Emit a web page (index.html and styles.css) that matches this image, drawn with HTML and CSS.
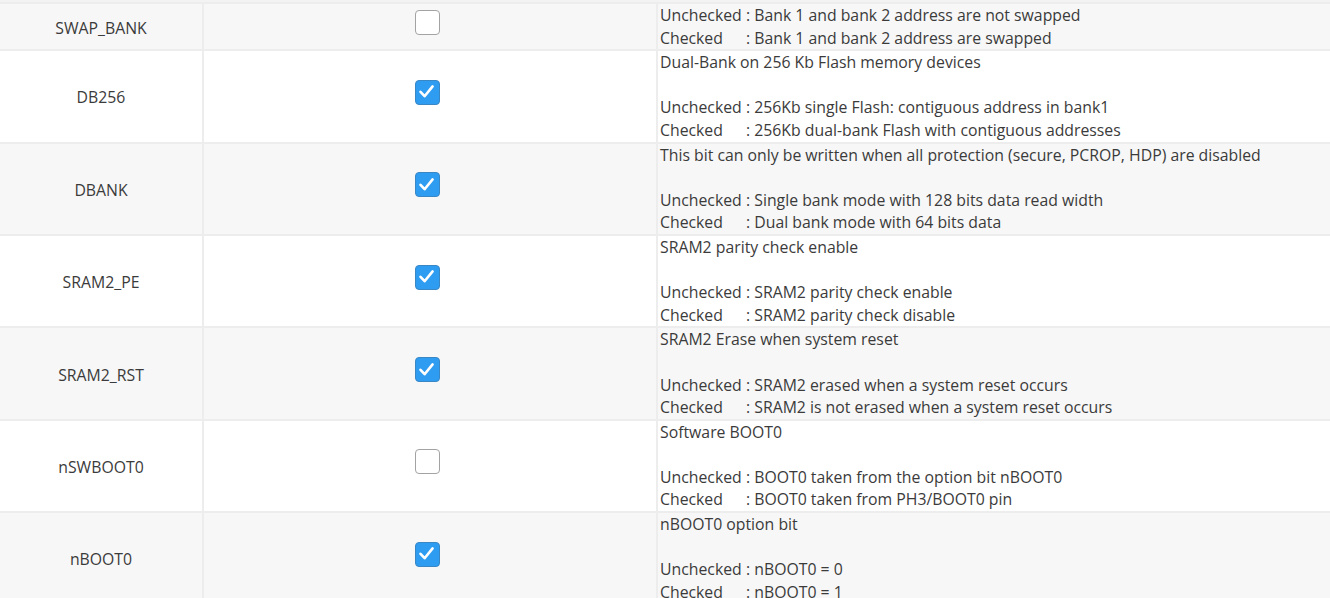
FILE: index.html
```html
<!DOCTYPE html>
<html>
<head>
<meta charset="utf-8">
<link rel="stylesheet" href="styles.css">
</head>
<body>
<div class="grid">
  <div class="name alt">SWAP_BANK</div>
  <div class="chk alt"><span class="box"></span></div>
  <div class="desc alt"><div><span class="k">Unchecked</span>: Bank 1 and bank 2 address are not swapped</div><div><span class="k">Checked</span>: Bank 1 and bank 2 address are swapped</div></div>

  <div class="name">DB256</div>
  <div class="chk"><span class="box on"><svg viewBox="0 0 25 25"><path d="M6.5 12.8 L10.6 17.2 L18.6 7.4"/></svg></span></div>
  <div class="desc"><div>Dual-Bank on 256 Kb Flash memory devices</div><div class="blank"></div><div><span class="k">Unchecked</span>: 256Kb single Flash: contiguous address in bank1</div><div><span class="k">Checked</span>: 256Kb dual-bank Flash with contiguous addresses</div></div>

  <div class="name alt">DBANK</div>
  <div class="chk alt"><span class="box on"><svg viewBox="0 0 25 25"><path d="M6.5 12.8 L10.6 17.2 L18.6 7.4"/></svg></span></div>
  <div class="desc alt"><div>This bit can only be written when all protection (secure, PCROP, HDP) are disabled</div><div class="blank"></div><div><span class="k">Unchecked</span>: Single bank mode with 128 bits data read width</div><div><span class="k">Checked</span>: Dual bank mode with 64 bits data</div></div>

  <div class="name">SRAM2_PE</div>
  <div class="chk"><span class="box on"><svg viewBox="0 0 25 25"><path d="M6.5 12.8 L10.6 17.2 L18.6 7.4"/></svg></span></div>
  <div class="desc"><div>SRAM2 parity check enable</div><div class="blank"></div><div><span class="k">Unchecked</span>: SRAM2 parity check enable</div><div><span class="k">Checked</span>: SRAM2 parity check disable</div></div>

  <div class="name alt">SRAM2_RST</div>
  <div class="chk alt"><span class="box on"><svg viewBox="0 0 25 25"><path d="M6.5 12.8 L10.6 17.2 L18.6 7.4"/></svg></span></div>
  <div class="desc alt"><div>SRAM2 Erase when system reset</div><div class="blank"></div><div><span class="k">Unchecked</span>: SRAM2 erased when a system reset occurs</div><div><span class="k">Checked</span>: SRAM2 is not erased when a system reset occurs</div></div>

  <div class="name">nSWBOOT0</div>
  <div class="chk"><span class="box"></span></div>
  <div class="desc"><div>Software BOOT0</div><div class="blank"></div><div><span class="k">Unchecked</span>: BOOT0 taken from the option bit nBOOT0</div><div><span class="k">Checked</span>: BOOT0 taken from PH3/BOOT0 pin</div></div>

  <div class="name alt">nBOOT0</div>
  <div class="chk alt"><span class="box on"><svg viewBox="0 0 25 25"><path d="M6.5 12.8 L10.6 17.2 L18.6 7.4"/></svg></span></div>
  <div class="desc alt"><div>nBOOT0 option bit</div><div class="blank"></div><div><span class="k">Unchecked</span>: nBOOT0 = 0</div><div><span class="k">Checked</span>: nBOOT0 = 1</div></div>
</div>
</body>
</html>
```

FILE: styles.css
```css
html, body {
  margin: 0;
  padding: 0;
  background: #ffffff;
  overflow: hidden;
}
body {
  font-family: "Open Sans", "Noto Sans", sans-serif;
  font-size: 15.8px;
  color: #3b3b3b;
}
.grid {
  display: grid;
  grid-template-columns: 202px 452px 1fr;
  gap: 2px;
  padding-top: 2px;
  background: #ededed;
  border-top: 2px solid #f3f3f3;
}
.grid > div {
  background: #ffffff;
}
.grid > div.alt {
  background: #f7f7f7;
}
.name {
  display: flex;
  align-items: center;
  justify-content: center;
  padding-top: 2px;
}
.chk {
  display: flex;
  align-items: center;
  justify-content: center;
  padding-right: 6px;
  padding-bottom: 8px;
}
.desc {
  padding-left: 2px;
  line-height: 22.6px;
  white-space: nowrap;
  overflow: hidden;
}
.blank {
  height: 22.6px;
}
.k {
  display: inline-block;
  width: 86px;
}
.box {
  display: block;
  width: 25px;
  height: 25px;
  box-sizing: border-box;
  border: 1.5px solid #a3a3a3;
  border-radius: 4px;
  background: #ffffff;
}
.box.on {
  background: #2e9cf0;
  border-color: #3a87c6;
}
.box svg {
  display: block;
  width: 25px;
  height: 25px;
  margin: -1.5px;
}
.box svg path {
  fill: none;
  stroke: #ffffff;
  stroke-width: 2.6;
  stroke-linecap: round;
  stroke-linejoin: round;
}
```
